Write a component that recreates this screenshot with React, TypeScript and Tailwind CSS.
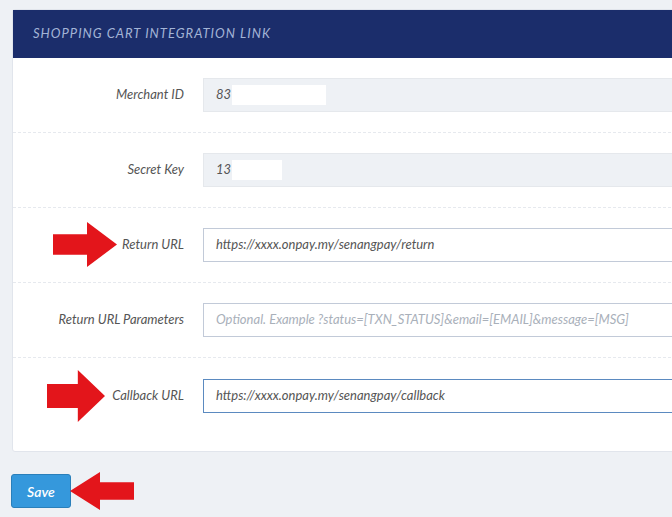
const Arrow = ({ w, h, left = false }: { w: number; h: number; left?: boolean }) => (
  <svg width={w} height={h} viewBox="0 0 64 48" preserveAspectRatio="none" style={left ? { transform: "scaleX(-1)" } : undefined}>
    <polygon points="0,13 34,13 34,0 64,24 34,48 34,35 0,35" fill="#e3151b" />
  </svg>
);

const Row = ({ label, children, arrow, last }: { label: string; children: React.ReactNode; arrow?: React.ReactNode; last?: boolean }) => (
  <div className={`relative flex items-center h-[75px] ${last ? "" : "border-b border-dashed border-[#e6e9ee]"}`}>
    {arrow}
    <div className="w-[190px] shrink-0 text-right pr-[19px] text-[13px] text-[#555]">{label}</div>
    {children}
  </div>
);

export default function App() {
  return (
    <div className="w-[672px] h-[517px] overflow-hidden bg-[#eef1f5] italic" style={{ fontFamily: "Lato, 'Open Sans', sans-serif" }}>
      <div className="pt-[9px] pl-[12px]">
        <div className="w-[700px] bg-white border border-[#e1e5ec] rounded-[3px]">
          <div className="h-[48px] bg-[#1b2d6b] flex items-center pl-[20px] text-[13px] tracking-[1px] text-[#a3b4d6]">SHOPPING CART INTEGRATION LINK</div>
          <div className="pb-[18px]">
            <Row label="Merchant ID">
              <div className="flex-1 h-[34px] bg-[#eef1f5] border border-[#e5e8ec] flex items-center pl-[12px] text-[13px] text-[#555]">
                83<span className="ml-[1px] w-[94px] h-[20px] bg-white" />
              </div>
            </Row>
            <Row label="Secret Key">
              <div className="flex-1 h-[34px] bg-[#eef1f5] border border-[#e5e8ec] flex items-center pl-[12px] text-[13px] text-[#555]">
                13<span className="ml-[1px] w-[50px] h-[20px] bg-white" />
              </div>
            </Row>
            <Row label="Return URL" arrow={<div className="absolute left-[40px] top-[14px]"><Arrow w={64} h={45} /></div>}>
              <div className="flex-1 h-[34px] bg-white border border-[#c2cad8] flex items-center pl-[12px] text-[13px] text-[#555]">https://xxxx.onpay.my/senangpay/return</div>
            </Row>
            <Row label="Return URL Parameters">
              <div className="flex-1 h-[34px] bg-white border border-[#c2cad8] flex items-center pl-[12px] text-[13px] text-[#a9b0ba]">Optional. Example ?status=[TXN_STATUS]&amp;email=[EMAIL]&amp;message=[MSG]</div>
            </Row>
            <Row last label="Callback URL" arrow={<div className="absolute left-[34px] top-[12px]"><Arrow w={58} h={52} /></div>}>
              <div className="flex-1 h-[34px] bg-white border border-[#5b8ac0] flex items-center pl-[12px] text-[13px] text-[#555]">https://xxxx.onpay.my/senangpay/callback</div>
            </Row>
          </div>
        </div>
      </div>
      <div className="flex items-center pl-[11px] pt-[20px]">
        <button className="w-[60px] h-[34px] bg-[#3598dc] border border-[#2a7fba] rounded-[3px] text-white text-[14px] font-semibold italic">Save</button>
        <div className="-ml-[1px]"><Arrow w={64} h={38} left /></div>
      </div>
    </div>
  );
}
